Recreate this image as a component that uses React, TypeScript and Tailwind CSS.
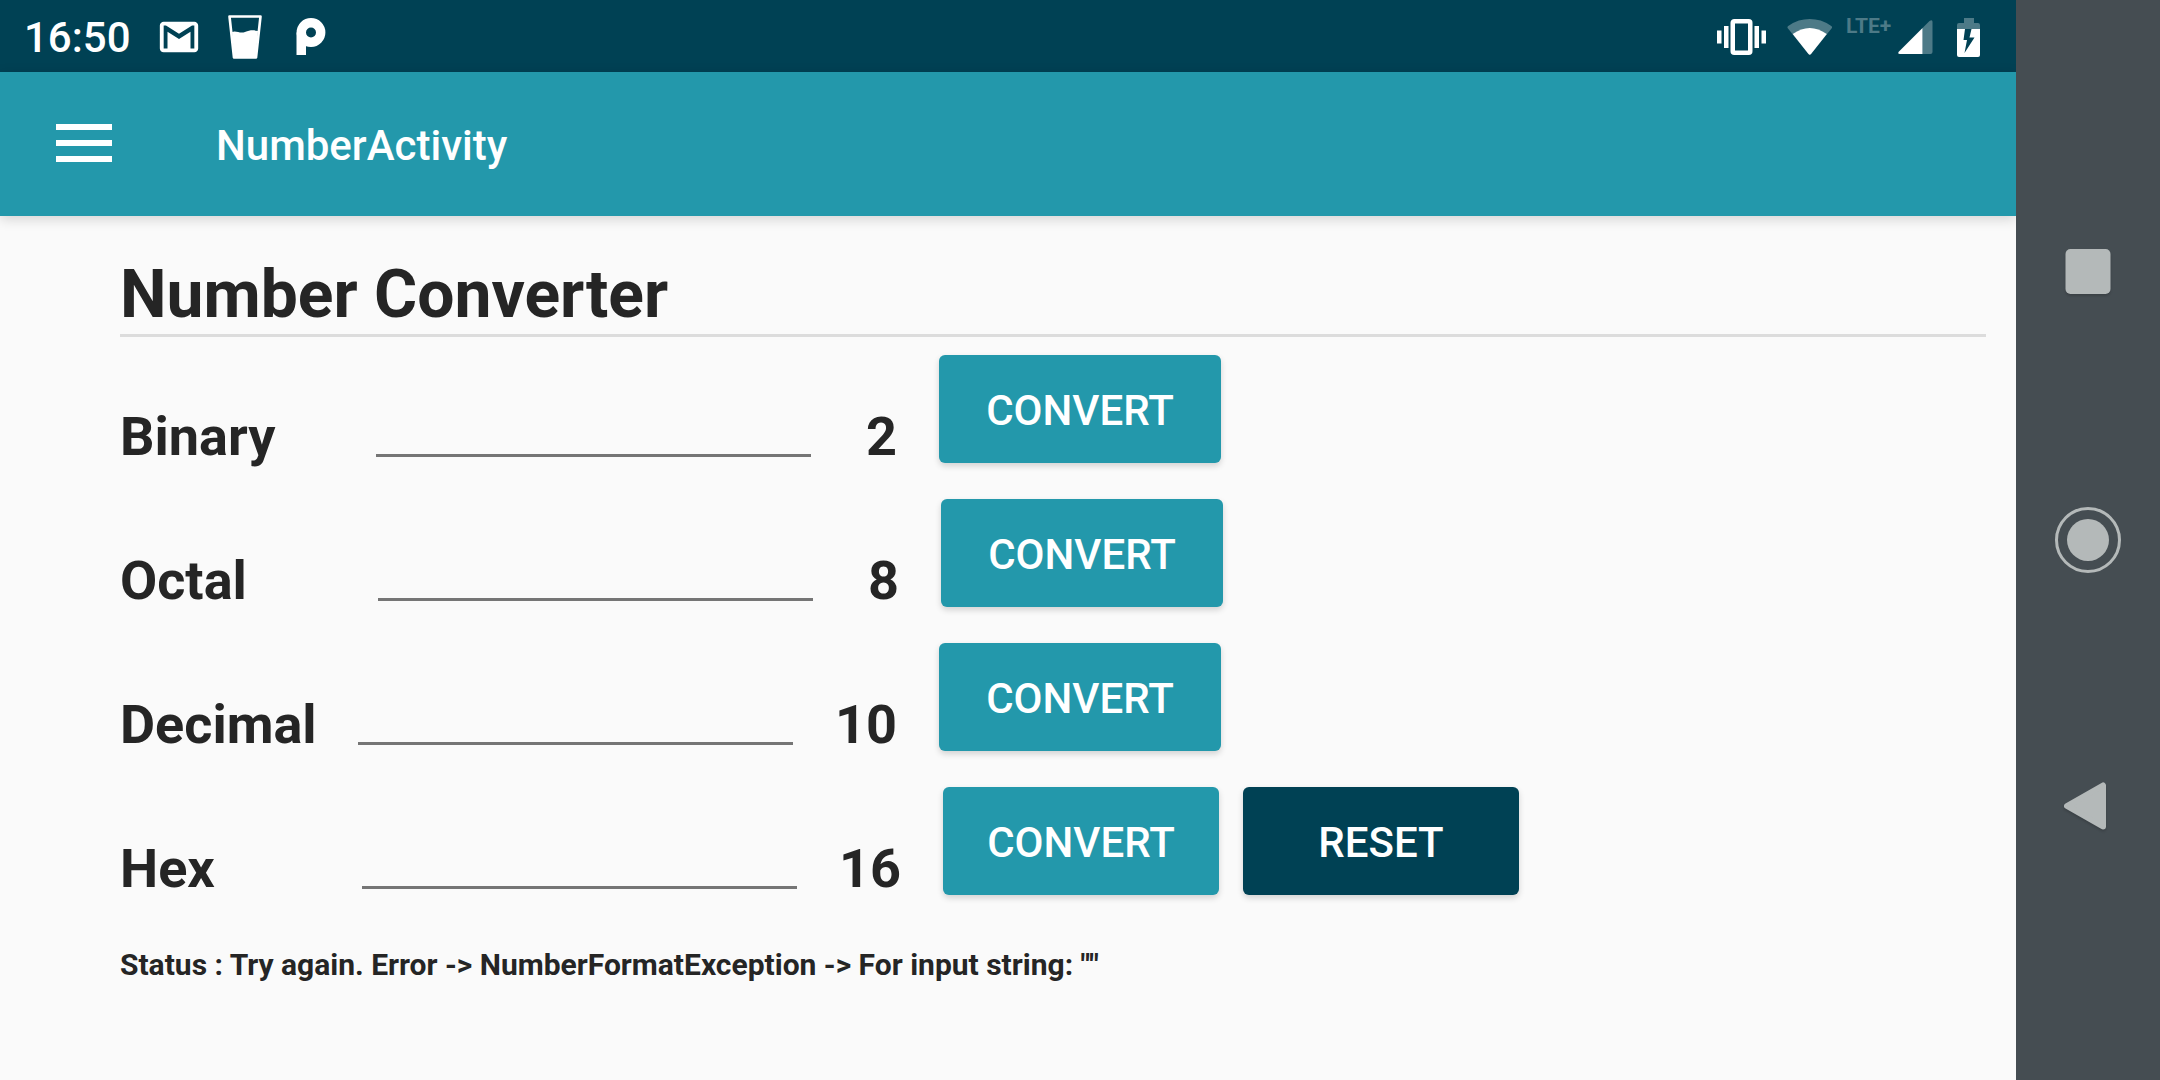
import { useState } from "react";

type Row = {
  id: string;
  label: string;
  base: string;
  labelWidth: string;
  baseWidth: string;
  buttonWidth: string;
};

const rows: Row[] = [
  { id: "binary", label: "Binary", base: "2", labelWidth: "w-[256px]", baseWidth: "w-[86px]", buttonWidth: "w-[282px]" },
  { id: "octal", label: "Octal", base: "8", labelWidth: "w-[258px]", baseWidth: "w-[86px]", buttonWidth: "w-[282px]" },
  { id: "decimal", label: "Decimal", base: "10", labelWidth: "w-[238px]", baseWidth: "w-[104px]", buttonWidth: "w-[282px]" },
  { id: "hex", label: "Hex", base: "16", labelWidth: "w-[242px]", baseWidth: "w-[104px]", buttonWidth: "w-[276px]" },
];

const empty: Record<string, string> = { binary: "", octal: "", decimal: "", hex: "" };

const buttonBase =
  "h-[108px] shrink-0 rounded-md pt-1 text-[42px] leading-[48px] font-medium text-white shadow-[0_3px_6px_rgba(0,0,0,0.16)]";

function StatusBar() {
  return (
    <div className="flex h-[72px] items-center justify-between bg-[#004154] pt-0.5 pr-9 pl-6 text-white">
      <div className="flex items-center">
        <span className="w-[132px] pt-0.5 text-[42px] leading-[48px] font-medium">16:50</span>
        <svg className="size-[46px]" viewBox="0 0 24 24" fill="currentColor" aria-hidden="true">
          <path d="M20 4H4c-1.1 0-2 .9-2 2v12c0 1.1.9 2 2 2h16c1.1 0 2-.9 2-2V6c0-1.1-.9-2-2-2zm0 14h-2V9.25L12 13 6 9.25V18H4V6h1.2l6.8 4.25L18.8 6H20v12z" />
        </svg>
        <svg className="ml-[26px] h-11 w-[34px]" viewBox="0 0 34 44" aria-hidden="true">
          <path d="M1.5 1.5h31L28 42.5H6z" fill="none" stroke="currentColor" strokeWidth="2.6" strokeLinejoin="round" />
          <path d="M4 17c4-2 8 2 13 0s8-2 13-1l-2.400 27H6.400z" fill="currentColor" />
        </svg>
        <svg className="ml-[34px] h-[38px] w-[30px]" viewBox="0 0 30 38" aria-hidden="true">
          <circle cx="15" cy="14.500" r="9.700" fill="none" stroke="currentColor" strokeWidth="9.400" />
          <path d="M.5 14.500H10V37H.5z" fill="currentColor" />
        </svg>
      </div>
      <div className="flex items-center">
        <svg className="h-9 w-[49px]" viewBox="0 0 49 36" fill="currentColor" aria-hidden="true">
          <path d="M0 11.500h4.500v13H0zM7 7h4.500v22H7zM37.500 7H42v22h-4.500zM44.500 11.500H49v13h-4.500z" />
          <rect x="15.750" y="2.250" width="17.500" height="31.500" rx="1.500" fill="none" stroke="currentColor" strokeWidth="4.500" />
        </svg>
        <svg className="ml-[21px] h-9 w-[46px]" viewBox="0 0 46 36" aria-hidden="true">
          <path d="M1 9.500Q-.5 7.500 2 6.500A36.400 36.400 0 0 1 43.500 6.500Q46 7.500 44.500 9.500L24 35Q22.750 36.500 21.500 35Z" fill="#4d7a87" />
          <path d="M5.700 15Q22.750 3 39.800 15L24 35Q22.750 36.500 21.500 35Z" fill="currentColor" />
        </svg>
        <span className="mb-[22px] ml-[13px] w-[52px] text-[21px] leading-6 font-bold text-[#4d7a87]">LTE+</span>
        <svg className="h-[34px] w-[35px]" viewBox="0 0 35 34" aria-hidden="true">
          <path d="M31.500 1Q34.500-1 34.500 2V32Q34.500 34 32.500 34H24.500V8z" fill="#4d7a87" />
          <path d="M24.500 8V34H2Q-1 34 1 31.500z" fill="currentColor" />
        </svg>
        <svg className="ml-6 h-[39px] w-[23px]" viewBox="0 0 23 39" aria-hidden="true">
          <path d="M7 0h10v5h4q2 0 2 2v4H0V7q0-2 2-2h5z" fill="#4d7a87" />
          <path d="M0 11h23v26q0 2-2 2H2q-2 0-2-2z" fill="currentColor" />
          <path d="M8 11h6.500l-2 8.500H17.500L7.500 35l2.500-13H6.500z" fill="#004154" />
        </svg>
      </div>
    </div>
  );
}

function NavigationBar() {
  return (
    <nav className="flex w-36 shrink-0 flex-col items-center justify-center gap-[184px] bg-[#454d52] text-[#b4b9b9]">
      <button type="button" aria-label="Recent apps" className="size-[84px]">
        <svg viewBox="0 0 84 84" fill="currentColor" className="drop-shadow-[0_2px_1px_rgba(0,0,0,0.15)]">
          <rect x="19.500" y="19" width="45" height="45" rx="5" />
        </svg>
      </button>
      <button type="button" aria-label="Home" className="size-[84px]">
        <svg viewBox="0 0 84 84">
          <circle cx="42" cy="42" r="31.500" fill="none" stroke="currentColor" strokeWidth="3" />
          <circle cx="42" cy="42" r="21" fill="currentColor" />
        </svg>
      </button>
      <button type="button" aria-label="Back" className="size-[84px]">
        <svg viewBox="0 0 84 84" className="drop-shadow-[0_2px_1px_rgba(0,0,0,0.15)]">
          <path d="M57 19.500V60.500L21 40z" fill="currentColor" stroke="currentColor" strokeWidth="6" strokeLinejoin="round" />
        </svg>
      </button>
    </nav>
  );
}

export default function App() {
  const [values, setValues] = useState(empty);
  const [status, setStatus] = useState('Try again. Error -> NumberFormatException -> For input string: ""');

  const convert = (row: Row) => {
    const value = parseInt(values[row.id], Number(row.base));
    if (Number.isNaN(value)) {
      setStatus(`Try again. Error -> NumberFormatException -> For input string: "${values[row.id]}"`);
      return;
    }
    setValues({
      binary: value.toString(2),
      octal: value.toString(8),
      decimal: value.toString(10),
      hex: value.toString(16),
    });
    setStatus("Success");
  };

  return (
    <div className="flex min-h-screen bg-[#fafafa] font-['Roboto',sans-serif] text-[#252525]">
      <div className="flex min-w-0 flex-1 flex-col">
        <StatusBar />
        <header className="flex h-36 items-center bg-[#2398ab] pl-14 text-white shadow-[0_3px_12px_rgba(0,0,0,0.16)]">
          <button type="button" aria-label="Open menu" className="flex w-[160px] flex-col gap-2.5 pb-0.5">
            <span className="h-1.5 w-14 bg-white" />
            <span className="h-1.5 w-14 bg-white" />
            <span className="h-1.5 w-14 bg-white" />
          </button>
          <span className="pt-1 text-[42px] leading-[48px] font-medium">NumberActivity</span>
        </header>
        <main className="pt-10 pr-[30px] pl-[120px]">
          <h1 className="border-b-[3px] border-[#dcdcdc] text-[66px] leading-[78px] font-bold">Number Converter</h1>
          <div className="flex flex-col gap-9 pt-[18px]">
            {rows.map((row) => (
              <div key={row.id} className="flex h-[108px] items-end">
                <label htmlFor={row.id} className={`${row.labelWidth} shrink-0 text-[54px] leading-[52px] font-bold`}>
                  {row.label}
                </label>
                <input
                  id={row.id}
                  type="text"
                  autoComplete="off"
                  value={values[row.id]}
                  onChange={(e) => setValues({ ...values, [row.id]: e.target.value })}
                  className="mb-1.5 h-20 w-[435px] border-b-[3px] border-[#757575] bg-transparent text-[54px] outline-none"
                />
                <span className={`${row.baseWidth} shrink-0 text-right text-[54px] leading-[52px] font-bold`}>{row.base}</span>
                <button
                  type="button"
                  onClick={() => convert(row)}
                  className={`${buttonBase} ${row.buttonWidth} ml-[42px] bg-[#2398ab]`}
                >
                  CONVERT
                </button>
                {row.id === "hex" && (
                  <button
                    type="button"
                    onClick={() => {
                      setValues(empty);
                      setStatus("");
                    }}
                    className={`${buttonBase} ml-6 w-[276px] bg-[#004154]`}
                  >
                    RESET
                  </button>
                )}
              </div>
            ))}
          </div>
          <p className="mt-[52px] text-[30px] leading-9 font-bold">Status : {status}</p>
        </main>
      </div>
      <NavigationBar />
    </div>
  );
}
